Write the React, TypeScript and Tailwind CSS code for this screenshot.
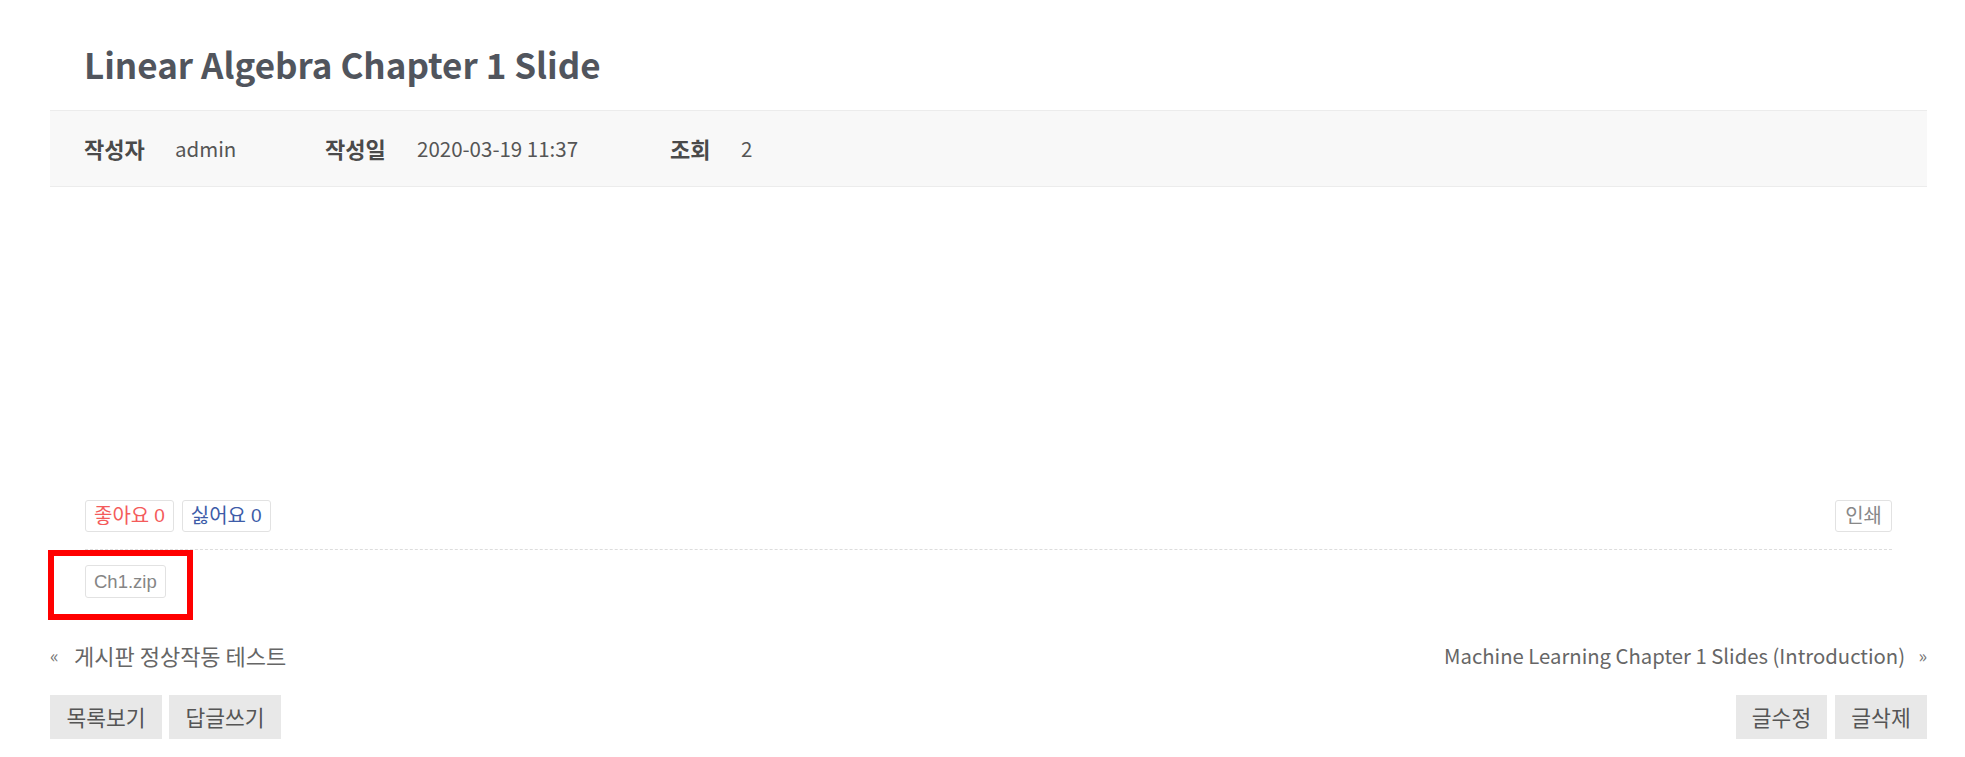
import React from "react";

const base = "font-['Noto_Sans_CJK_KR','Noto_Sans',sans-serif]";
const btnFont = "font-['Liberation_Sans','Noto_Sans_CJK_KR',sans-serif]";

export default function App() {
  return (
    <div className={`relative w-[1965px] h-[757px] overflow-hidden bg-white ${base}`}>
      <div className="ml-[50px] w-[1877px]">
        <h1 className="pt-[41px] pl-[34px] text-[35px] leading-[46px] font-bold text-[#51555d]">
          Linear Algebra Chapter 1 Slide
        </h1>

        <div className="mt-[23px] h-[77px] flex items-center pl-[34px] bg-[#f8f8f8] border-y border-[#ececec] text-[20.5px]">
          <div className="w-[241px] flex items-center">
            <span className="w-[91px] text-[22px] font-bold text-[#4a4a4a]">작성자</span>
            <span className="text-[#555]">admin</span>
          </div>
          <div className="w-[345px] flex items-center">
            <span className="w-[92px] text-[22px] font-bold text-[#4a4a4a]">작성일</span>
            <span className="text-[#555]">2020-03-19 11:37</span>
          </div>
          <div className="flex items-center">
            <span className="w-[71px] text-[22px] font-bold text-[#4a4a4a]">조회</span>
            <span className="text-[#555]">2</span>
          </div>
        </div>

        <div className="h-[313px]" />

        <div className="px-[35px]">
          <div className={`flex items-center justify-between ${btnFont} text-[19px]`}>
            <div className="flex gap-[8px]">
              <span className="h-[32px] px-[8px] flex items-center gap-[5px] border border-[#e2e2e2] rounded-[3px] bg-white text-[#f45b5b]">
                <span className="text-[20px]">좋아요</span>
                <span>0</span>
              </span>
              <span className="h-[32px] px-[8px] flex items-center gap-[5px] border border-[#e2e2e2] rounded-[3px] bg-white text-[#3d5ca8]">
                <span className="text-[20px]">싫어요</span>
                <span>0</span>
              </span>
            </div>
            <span className="h-[32px] px-[9px] flex items-center border border-[#e2e2e2] rounded-[3px] bg-white text-[20px] text-[#888]">
              인쇄
            </span>
          </div>
          <div className="mt-[17px] border-t border-dashed border-[#dddddd]" />
          <div className={`mt-[15px] flex ${btnFont} text-[18.5px]`}>
            <span className="h-[33px] px-[8px] flex items-center border border-[#e2e2e2] rounded-[3px] bg-white text-[#858585]">
              Ch1.zip
            </span>
          </div>
        </div>

        <div className="mt-[44px] h-[26px] flex items-center justify-between text-[20.3px] text-[#666]">
          <div className="flex items-center">
            <span className="w-[24px] text-[18px] text-[#777]">«</span>
            <span className="text-[22px]">게시판 정상작동 테스트</span>
          </div>
          <div className="flex items-center">
            <span>Machine Learning Chapter 1 Slides (Introduction)</span>
            <span className="w-[22px] text-right text-[18px] text-[#777]">»</span>
          </div>
        </div>

        <div className="mt-[27px] flex items-center justify-between text-[21.5px] text-[#555]">
          <div className="flex gap-[7px]">
            <span className="w-[112px] h-[44px] flex items-center justify-center bg-[#e8e8e8]">목록보기</span>
            <span className="w-[112px] h-[44px] flex items-center justify-center bg-[#e8e8e8]">답글쓰기</span>
          </div>
          <div className="flex gap-[8px]">
            <span className="w-[91px] h-[44px] flex items-center justify-center bg-[#e8e8e8]">글수정</span>
            <span className="w-[92px] h-[44px] flex items-center justify-center bg-[#e8e8e8]">글삭제</span>
          </div>
        </div>
      </div>

      <div className="absolute left-[48px] top-[550px] w-[145px] h-[70px] border-[6px] border-[#ff0000]" />
    </div>
  );
}
